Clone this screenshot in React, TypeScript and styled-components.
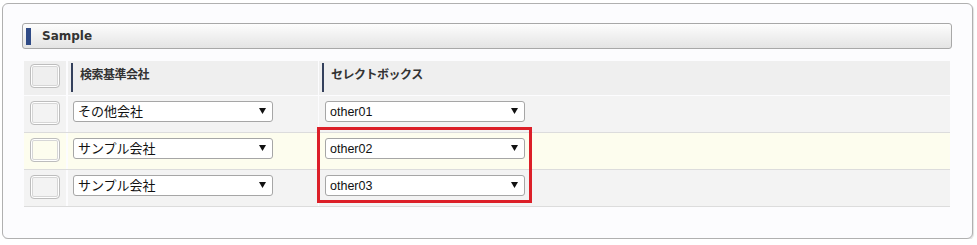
import styled, { createGlobalStyle } from "styled-components";

const GlobalStyle = createGlobalStyle`
  body {
    margin: 0;
    background: #fff;
    font-family: "Liberation Sans", "Noto Sans CJK JP", sans-serif;
    color: #222;
  }
`;

type Tone = "head" | "gray" | "yellow";

const toneBg: Record<Tone, string> = {
  head: "#efefef",
  gray: "#f3f3f3",
  yellow: "#fdfdee",
};

const rows: { company: string; value: string; tone: Tone }[] = [
  { company: "その他会社", value: "other01", tone: "gray" },
  { company: "サンプル会社", value: "other02", tone: "yellow" },
  { company: "サンプル会社", value: "other03", tone: "gray" },
];

function Arrow() {
  return (
    <ArrowIcon width="7" height="6" viewBox="0 0 7 6">
      <polygon points="0,0 7,0 3.5,6" fill="#111" />
    </ArrowIcon>
  );
}

function Dropdown({ value, $size }: { value: string; $size: number }) {
  return (
    <SelectWrap>
      <Select $size={$size} value={value} onChange={() => {}}>
        <option value={value}>{value}</option>
      </Select>
      <Arrow />
    </SelectWrap>
  );
}

export default function App() {
  return (
    <>
      <GlobalStyle />
      <Panel>
        <TitleBar>
          <TitleMark />
          <Title>Sample</Title>
        </TitleBar>

        <Table>
          <Row>
            <CheckCell $tone="head" $top={3}>
              <CheckBox $tone="head" />
            </CheckCell>
            <Cell $tone="head" $sep={2}>
              <HeadLabel>検索基準会社</HeadLabel>
            </Cell>
            <Cell $tone="head" $sep={1}>
              <HeadLabel>セレクトボックス</HeadLabel>
            </Cell>
          </Row>

          {rows.map((row) => (
            <Row key={row.value} $line>
              <CheckCell $tone={row.tone} $top={5}>
                <CheckBox $tone={row.tone} />
              </CheckCell>
              <Cell $tone={row.tone} $sep={2} $pad={5}>
                <Dropdown value={row.company} $size={13} />
              </Cell>
              <Cell $tone={row.tone} $sep={1} $pad={6}>
                <Dropdown value={row.value} $size={12.5} />
              </Cell>
            </Row>
          ))}

          <Highlight />
        </Table>
      </Panel>
    </>
  );
}

const Panel = styled.div`
  box-sizing: border-box;
  width: 971px;
  height: 236px;
  margin: 3px 0 0 2px;
  padding: 19px 0 0 19px;
  background: #fcfcfe;
  border: 1px solid #b0b0b0;
  border-radius: 6px;
  box-shadow: 1px 1px 1px rgba(0, 0, 0, 0.12);
`;

const TitleBar = styled.div`
  box-sizing: border-box;
  width: 930px;
  height: 26px;
  display: flex;
  align-items: center;
  padding-left: 3px;
  background: linear-gradient(#fdfdfd, #e4e4e4);
  border: 1px solid #a8a8a8;
  border-radius: 3px;
`;

const TitleMark = styled.div`
  width: 5px;
  height: 17px;
  background: #2f4a86;
`;

const Title = styled.div`
  margin-left: 11px;
  font-family: "DejaVu Sans", sans-serif;
  font-size: 12px;
  font-weight: bold;
  color: #333;
`;

const Table = styled.div`
  position: relative;
  width: 926px;
  margin: 12px 0 0 2px;
`;

const Row = styled.div<{ $line?: boolean }>`
  display: grid;
  grid-template-columns: 42px 252px 1fr;
  height: ${({ $line }) => ($line ? "36px" : "34px")};
  border-top: ${({ $line }) => ($line ? "0" : "0")};
  border-bottom: 1px solid ${({ $line }) => ($line ? "#dcdcdc" : "#fcfcfe")};
`;

const Cell = styled.div<{ $tone: Tone; $sep: number; $pad?: number }>`
  box-sizing: border-box;
  background: ${({ $tone }) => toneBg[$tone]};
  border-left: ${({ $sep }) => $sep}px solid #fcfcfe;
  padding: ${({ $pad }) => ($pad ? `5px 0 0 ${$pad}px` : "2px 0 0 3px")};
`;

const CheckCell = styled.div<{ $tone: Tone; $top: number }>`
  background: ${({ $tone }) => toneBg[$tone]};
  padding: ${({ $top }) => $top}px 0 0 6px;
`;

const CheckBox = styled.div<{ $tone: Tone }>`
  box-sizing: border-box;
  width: 30px;
  height: 24px;
  background: ${({ $tone }) => toneBg[$tone]};
  border: 1px solid #bdbdbd;
  border-radius: 4px;
  box-shadow: inset 0 0 0 1px #fff, inset 0 0 0 2px #d6d6d6;
`;

const HeadLabel = styled.div`
  box-sizing: border-box;
  height: 29px;
  border-left: 2px solid #34405c;
  padding: 3px 0 0 7px;
  font-family: "Noto Sans CJK JP", sans-serif;
  font-size: 12px;
  line-height: 16px;
  font-weight: bold;
  color: #333;
  letter-spacing: -0.5px;
`;

const SelectWrap = styled.div`
  position: relative;
  width: 200px;
  height: 21px;
`;

const Select = styled.select<{ $size: number }>`
  box-sizing: border-box;
  appearance: none;
  width: 200px;
  height: 21px;
  margin: 0;
  padding: 0 0 0 4px;
  background: #fff;
  border: 1px solid #a6a6a6;
  border-radius: 3px;
  font-family: "Liberation Sans", "Noto Sans CJK JP", sans-serif;
  font-size: ${({ $size }) => $size}px;
  color: #111;
  outline: none;
`;

const ArrowIcon = styled.svg`
  position: absolute;
  right: 7px;
  top: 7px;
  pointer-events: none;
`;

const Highlight = styled.div`
  position: absolute;
  left: 293px;
  top: 66px;
  width: 215px;
  height: 76px;
  box-sizing: border-box;
  border: 3px solid #dc1f28;
  pointer-events: none;
`;
